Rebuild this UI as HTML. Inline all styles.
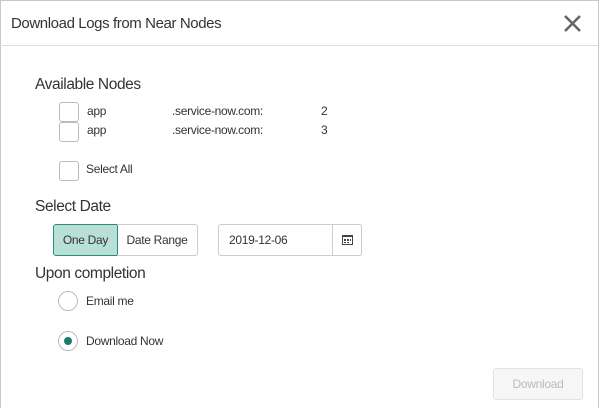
<!DOCTYPE html>
<html><head><style>
body{margin:0;width:600px;height:407px;overflow:hidden;background:#fff;font-family:"Liberation Sans",sans-serif;color:#333;position:relative}
.f{position:absolute;left:0;top:0;width:597px;height:407px;border:1px solid #c8c8c8;border-bottom:none}
.a{position:absolute;white-space:nowrap}
.t{font-size:15px;letter-spacing:-0.4px}
.h{font-size:15.5px;letter-spacing:-0.4px}
.s{font-size:12px;letter-spacing:-0.3px}
.cb{position:absolute;width:18px;height:18px;border:1px solid #bbb;border-radius:3px;background:#fff}
.rd{position:absolute;width:18px;height:18px;border:1px solid #bbb;border-radius:50%;background:#fff}
</style></head><body>
<div class="f"></div>
<div class="a" style="left:0;top:45px;width:598px;height:1px;background:#ddd"></div>
<div class="a t" style="left:11px;top:15px;color:#333">Download Logs from Near Nodes</div>
<svg class="a" style="left:563px;top:14px" width="19" height="19"><path d="M2 2L17 17M17 2L2 17" stroke="#666" stroke-width="2.6"/></svg>
<div class="a h" style="left:35px;top:76px">Available Nodes</div>
<div class="cb" style="left:59px;top:102px"></div>
<div class="cb" style="left:59px;top:122px"></div>
<div class="a s" style="left:87px;top:104px">app</div><div class="a s" style="left:172px;top:104px">.service-now.com:</div><div class="a s" style="left:321px;top:104px">2</div>
<div class="a s" style="left:87px;top:123px">app</div><div class="a s" style="left:172px;top:123px">.service-now.com:</div><div class="a s" style="left:321px;top:123px">3</div>
<div class="cb" style="left:59px;top:161px"></div>
<div class="a s" style="left:86px;top:162px">Select All</div>
<div class="a h" style="left:35px;top:198px">Select Date</div>
<div class="a s" style="left:53px;top:224px;width:63px;height:30px;border:1px solid #2d8f7b;border-radius:3px 0 0 3px;background:#b8e0d6;line-height:30px;text-align:center">One Day</div>
<div class="a s" style="left:117px;top:224px;width:80px;height:30px;border:1px solid #ccc;border-left:none;border-radius:0 3px 3px 0;line-height:30px;text-align:center">Date Range</div>
<div class="a s" style="left:218px;top:224px;width:113px;height:30px;border:1px solid #ccc;border-radius:3px 0 0 3px;line-height:30px;text-indent:10px">2019-12-06</div>
<div class="a" style="left:332px;top:224px;width:29px;height:30px;border:1px solid #ccc;border-left:none;border-radius:0 3px 3px 0"></div>
<svg class="a" style="left:342px;top:234px" width="11" height="11"><rect x="0.5" y="1.5" width="10" height="9" fill="none" stroke="#444"/><rect x="0" y="1" width="11" height="2" fill="#444"/><rect x="2" y="5" width="2" height="2" fill="#444"/><rect x="5" y="5" width="2" height="2" fill="#444"/><rect x="8" y="5" width="1" height="2" fill="#444"/><rect x="2" y="8" width="2" height="1" fill="#444"/><rect x="5" y="8" width="2" height="1" fill="#444"/></svg>
<div class="a h" style="left:35px;top:265px">Upon completion</div>
<div class="rd" style="left:58px;top:291px"></div>
<div class="a s" style="left:86px;top:294px">Email me</div>
<div class="rd" style="left:58px;top:331px"><div style="position:absolute;left:5px;top:5px;width:8px;height:8px;border-radius:50%;background:#1f7a6a"></div></div>
<div class="a s" style="left:86px;top:334px">Download Now</div>
<div class="a s" style="left:493px;top:368px;width:88px;height:30px;border:1px solid #e2e2e2;border-radius:3px;background:#f6f6f6;color:#bbb;line-height:30px;text-align:center">Download</div>
</body></html>
